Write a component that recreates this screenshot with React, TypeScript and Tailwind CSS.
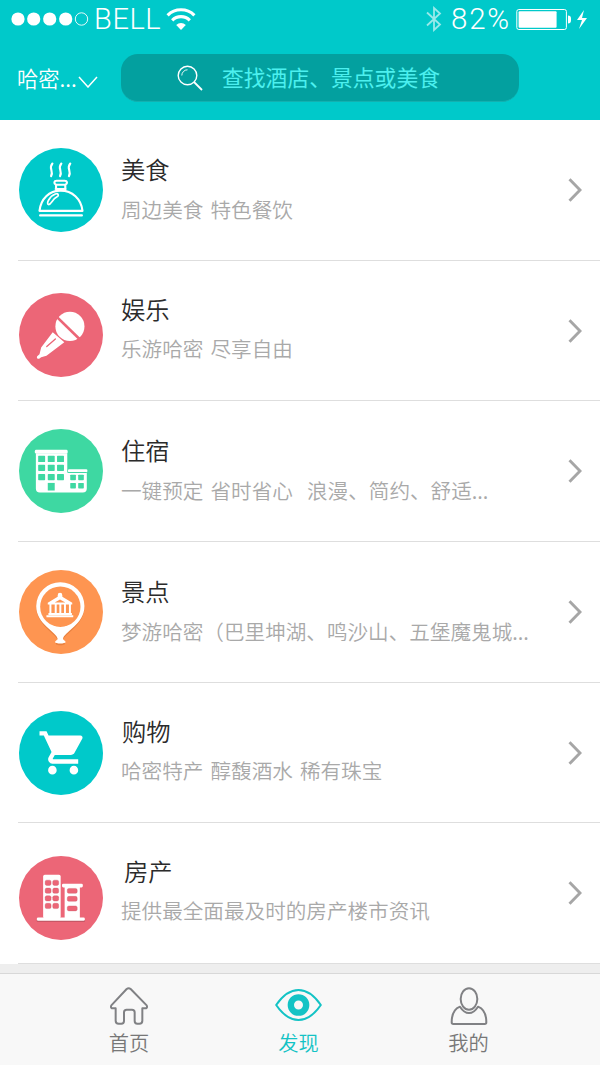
import type { ReactNode } from 'react';

interface Category {
  title: string;
  desc: string;
  icon: ReactNode;
  color: string;
  height: string;
  iconOffset: string;
  textOffset: string;
  titleOffset: string;
  descOffset: string;
}

function FoodIcon() {
  return (
    <svg viewBox="0 0 254 254" className="size-full" fill="none" stroke="#fff" strokeWidth="6.5" strokeLinecap="round" strokeLinejoin="round">
      <path d="M101 47c-13 15 5 22-4 38M128 47c-13 15 5 22-4 38M155 47c-13 15 5 22-4 38" />
      <path d="M112 111c-8-4-6-12 2-12h24c8 0 10 8 2 12zM112 111v13M140 111v13M111 124h30" />
      <path d="M62 190c4-36 29-61 64-61s62 25 66 61z" />
      <path d="M64 204h126" strokeWidth="7" />
      <path d="M89 171c-8-2 4-26 21-32 9-3 12 5 4 9-14 7-15 23-25 23z" strokeWidth="5" />
    </svg>
  );
}

function MicIcon() {
  return (
    <svg viewBox="0 0 254 254" className="size-full">
      <circle cx="154" cy="101" r="44" fill="#fff" />
      <path d="M108 66l78 76" stroke="#ec6677" strokeWidth="8" />
      <path d="M102 119l35 30-54 41-16 4-5 4c-5 3-10-2-7-7l7-6 5-20z" fill="#fff" />
      <path d="M110 139l-26 23" stroke="#ec6677" strokeWidth="4" strokeLinecap="round" />
    </svg>
  );
}

function HotelIcon() {
  return (
    <svg viewBox="0 0 254 254" className="size-full">
      <g fill="#fff">
        <rect x="48" y="63" width="99" height="11" rx="4" />
        <path d="M51 73h95v58h59v49q0 12-12 12H63q-12 0-12-12z" />
        <rect x="148" y="122" width="59" height="9" rx="4" />
      </g>
      <path d="M147 131.5h58" stroke="#3ed8a2" strokeWidth="3" />
      <g fill="#3ed8a2">
        {[81, 108, 136].map((y) => [58, 87, 115].map((x) => <rect key={`${x}-${y}`} x={x} y={y} width="21" height="19" rx="2" />))}
        <rect x="87" y="163" width="21" height="23" />
        {[138, 163].map((y) => [155, 179].map((x) => <rect key={`${x}-${y}`} x={x} y={y} width="17" height="17" rx="2" />))}
      </g>
    </svg>
  );
}

function SpotIcon() {
  return (
    <svg viewBox="0 0 254 254" className="size-full">
      <path d="M111 220c0-4 6-5 7-9-3-20-66-47-66-102a73 72 0 0 1 146 0c0 55-63 82-66 102 1 4 7 5 7 9 0 6-28 6-28 0z" fill="#d36c2c" opacity=".5" transform="translate(0 3)" />
      <path d="M109 218c0-4 7-5 8-9-2-22-65-44-65-100a73 72 0 0 1 146 0c0 56-63 78-65 100 1 4 8 5 8 9 0 6-32 6-32 0z" fill="#fff" />
      <circle cx="125" cy="111" r="61" fill="#fe9551" />
      <path d="M87 99l30-18v-5a7 7 0 0 1 14 0v5l30 18v5H87z" fill="#fff" />
      <path d="M108 98l16-9 16 9z" fill="#fe9551" />
      <path d="M95 102v32M111 102v32M125 102v32M139 102v32M154 102v32" stroke="#fff" strokeWidth="6" />
      <path d="M89 133h71M83 140h81" stroke="#fff" strokeWidth="6" />
    </svg>
  );
}

function CartIcon() {
  return (
    <svg viewBox="0 0 254 254" className="size-full">
      <path
        transform="translate(55.5 48) scale(6.5 6.55)"
        fill="#fff"
        d="M7 18c-1.1 0-2 .9-2 2s.9 2 2 2 2-.9 2-2-.9-2-2-2zM1 2v2h2l3.6 7.59-1.35 2.45c-.16.28-.25.61-.25.96 0 1.1.9 2 2 2h12v-2H7.42c-.14 0-.25-.11-.25-.25l.03-.12.9-1.63h7.45c.75 0 1.41-.41 1.75-1.03l3.58-6.49A1 1 0 0 0 20 4H5.21l-.94-2H1zm16 16c-1.1 0-2 .9-2 2s.9 2 2 2 2-.9 2-2-.9-2-2-2z"
      />
    </svg>
  );
}

function EstateIcon() {
  return (
    <svg viewBox="0 0 254 254" className="size-full">
      <path d="M54 196h145" stroke="#9c4450" strokeWidth="5" opacity=".6" />
      <g fill="#fff">
        <rect x="73" y="57" width="53" height="132" rx="5" />
        <rect x="138" y="92" width="46" height="96" />
        <rect x="130" y="84" width="63" height="11" rx="4" />
        <rect x="54" y="186" width="145" height="10" rx="4" />
      </g>
      <g fill="#ec6677" stroke="#c95564" strokeWidth="1">
        {[73, 97, 120, 143].map((y) => [79, 102].map((x) => <rect key={`${x}-${y}`} x={x} y={y} width="18" height="16" rx="5" />))}
        {[98, 122, 151].map((y) => <rect key={y} x="146" y={y} width="30" height="15" rx="5" />)}
      </g>
    </svg>
  );
}

const categories: Category[] = [
  { title: '美食', desc: '周边美食 特色餐饮', icon: <FoodIcon />, color: 'bg-[#00c9ca]', height: 'h-[141px]', iconOffset: 'mt-7', textOffset: 'pt-[29px]', titleOffset: '', descOffset: '' },
  { title: '娱乐', desc: '乐游哈密 尽享自由', icon: <MicIcon />, color: 'bg-[#ec6677]', height: 'h-[140px]', iconOffset: 'mt-8', textOffset: 'pt-[28px]', titleOffset: '', descOffset: '-mt-px' },
  { title: '住宿', desc: '一键预定 省时省心\u00a0 浪漫、简约、舒适...', icon: <HotelIcon />, color: 'bg-[#3ed8a2]', height: 'h-[141px]', iconOffset: 'mt-7', textOffset: 'pt-[29px]', titleOffset: '', descOffset: '' },
  { title: '景点', desc: '梦游哈密（巴里坤湖、鸣沙山、五堡魔鬼城...', icon: <SpotIcon />, color: 'bg-[#fe9551]', height: 'h-[141px]', iconOffset: 'mt-7', textOffset: 'pt-[29px]', titleOffset: '', descOffset: '' },
  { title: '购物', desc: '哈密特产 醇馥酒水 稀有珠宝', icon: <CartIcon />, color: 'bg-[#00c9ca]', height: 'h-[140px]', iconOffset: 'mt-7', textOffset: 'pt-[28px]', titleOffset: 'pl-px', descOffset: '-mt-px' },
  { title: '房产', desc: '提供最全面最及时的房产楼市资讯', icon: <EstateIcon />, color: 'bg-[#ec6677]', height: 'h-[141px]', iconOffset: 'mt-[33px]', textOffset: 'pt-[28px]', titleOffset: 'pl-[3px]', descOffset: '-mt-px' },
];

function StatusBar() {
  return (
    <div className="flex h-[38px] items-center pl-[11px] pr-[11px]">
      <svg viewBox="0 0 78 14" className="h-[14px] w-[78px]" fill="#fff">
        {[7, 22.7, 38.7, 54.7].map((x) => <circle key={x} cx={x} cy="7" r="6.6" />)}
        <circle cx="70.5" cy="7" r="6.2" fill="none" stroke="#fff" strokeWidth=".9" />
      </svg>
      <span className="ml-[5px] w-[70px] font-[Roboto] text-[29px] leading-[38px] font-light tracking-[0.6px]">BELL</span>
      <svg viewBox="0 0 30 24" className="ml-[2px] h-6 w-[30px]" fill="none" stroke="#fff" strokeWidth="3.2">
        <path d="M1.6 8.3a19 19 0 0 1 26.8 0M6.2 13.3a12.5 12.5 0 0 1 17.6 0" />
        <path d="M10.2 18a7 7 0 0 1 9.6 0L15 23z" fill="#fff" stroke="none" />
      </svg>
      <svg viewBox="0 0 16 26" className="ml-auto h-[26px] w-4" fill="none" stroke="#fff" strokeOpacity=".6" strokeWidth="1.8">
        <path d="M1 6.5l13 12-6 5.5V2l6 5.5-13 12" />
      </svg>
      <span className="ml-[9px] w-[61px] font-[Roboto] text-[29.5px] leading-[38px] font-light tracking-[1.8px]">82%</span>
      <svg viewBox="0 0 74 24" className="ml-[3px] h-6 w-[74px]" fill="#fff">
        <rect x="1.8" y="2.5" width="49.6" height="20" rx="2" fill="none" stroke="#fff" strokeWidth="1" />
        <rect x="3.6" y="4.3" width="38" height="16.4" rx="1" />
        <path d="M53 8.5q3 0 3 3v2q0 3-3 3zM69 3l-7 10h5l-3 9 8-11h-5z" />
      </svg>
    </div>
  );
}

function Header() {
  return (
    <header className="h-[120px] bg-[#00c9ca] text-white">
      <StatusBar />
      <div className="flex items-start pt-4">
        <div className="flex h-12 w-[121px] items-center pl-[17px]">
          <span className="-mt-px text-[21.3px] leading-none font-[350]">哈密...</span>
          <svg viewBox="0 0 20 12" className="mt-2 ml-px h-3 w-5" fill="none" stroke="#fff" strokeWidth="1.5">
            <path d="M1 1l9 10 9-10" />
          </svg>
        </div>
        <div className="flex h-12 w-[398px] items-center rounded-[17px] border-b border-[#13b0b0] bg-[#03a09f] pl-[56px]">
          <svg viewBox="0 0 26 26" className="size-[26px]" fill="none" stroke="#fff" strokeWidth="1.4">
            <circle cx="10.5" cy="10.5" r="9.3" />
            <path d="M4.8 10.5a5.7 5.7 0 0 1 5.7-5.7" strokeWidth=".9" />
            <path d="M17 17l8 8" strokeWidth="1.8" />
          </svg>
          <span className="-mt-[2px] ml-[19px] text-[21.8px] leading-none text-[#4cf0ef]">查找酒店、景点或美食</span>
        </div>
      </div>
    </header>
  );
}

function CategoryRow({ item }: { item: Category }) {
  return (
    <li className={`ml-[18px] flex items-start border-b border-[#dedede] ${item.height}`}>
      <div className={`ml-px size-[84px] shrink-0 overflow-hidden rounded-full ${item.color} ${item.iconOffset}`}>{item.icon}</div>
      <div className={`flex-1 pl-[18px] whitespace-nowrap ${item.textOffset}`}>
        <h2 className={`text-[24.3px] leading-10 font-[350] text-[#2b2b2b] ${item.titleOffset}`}>{item.title}</h2>
        <p className={`text-[20.6px] leading-10 font-[350] text-[#a9a9a9] [word-spacing:2.5px] ${item.descOffset}`}>{item.desc}</p>
      </div>
      <svg viewBox="0 0 14 24" className="mt-[58px] mr-[18px] h-6 w-[14px] shrink-0" fill="none" stroke="#a6a6a6" strokeWidth="2.9">
        <path d="M1.5 1.2L12 12 1.5 22.8" />
      </svg>
    </li>
  );
}

function TabBar() {
  return (
    <nav className="grid h-[92px] grid-cols-[170px_169px_171px] border-t border-[#d8d8d8] bg-[#f8f8f8] pl-11 text-[20.3px] font-[350] text-[#777]">
      <a className="flex flex-col items-center pt-[13px]">
        <svg viewBox="0 0 114 114" className="size-[38px]" fill="none" stroke="#808184" strokeWidth="6" strokeLinejoin="round">
          <path d="M50 6q6-5 12 0l48 49q4 9-6 9h-7v37q0 9-9 9H82q-8 0-8-8V76q0-8-8-8H50q-8 0-8 8v26q0 8-8 8h-8q-9 0-9-9V64h-7q-10 0-6-9z" />
        </svg>
        <span className="-mt-px leading-9">首页</span>
      </a>
      <a className="flex flex-col items-center pt-[13px] text-[#13c3c5]">
        <svg viewBox="0 0 140 114" className="h-[38px] w-[47px]" fill="none" stroke="#13c3c5">
          <path d="M3 54Q34 9 70 9t67 45Q106 99 70 99T3 54z" strokeWidth="6" strokeLinejoin="round" />
          <circle cx="70" cy="54" r="23" strokeWidth="19" />
        </svg>
        <span className="-mt-px leading-9">发现</span>
      </a>
      <a className="flex flex-col items-center pt-[13px]">
        <svg viewBox="0 0 114 114" className="size-[38px]" fill="none" stroke="#808184" strokeWidth="6" strokeLinejoin="round">
          <ellipse cx="57" cy="36" rx="25" ry="32" />
          <path d="M30 59C12 66 5 85 5 106q0 5 5 5h94q5 0 5-5c0-21-7-40-25-47q-12 19-27 19T30 59z" />
        </svg>
        <span className="-mt-px leading-9">我的</span>
      </a>
    </nav>
  );
}

export default function App() {
  return (
    <div className="flex h-[1065px] w-[600px] flex-col overflow-hidden bg-white font-['Noto_Sans_CJK_SC',sans-serif]">
      <Header />
      <ul>
        {categories.map((item) => (
          <CategoryRow key={item.title} item={item} />
        ))}
      </ul>
      <div className="h-[9px] bg-[#eeeeee]" />
      <TabBar />
    </div>
  );
}
